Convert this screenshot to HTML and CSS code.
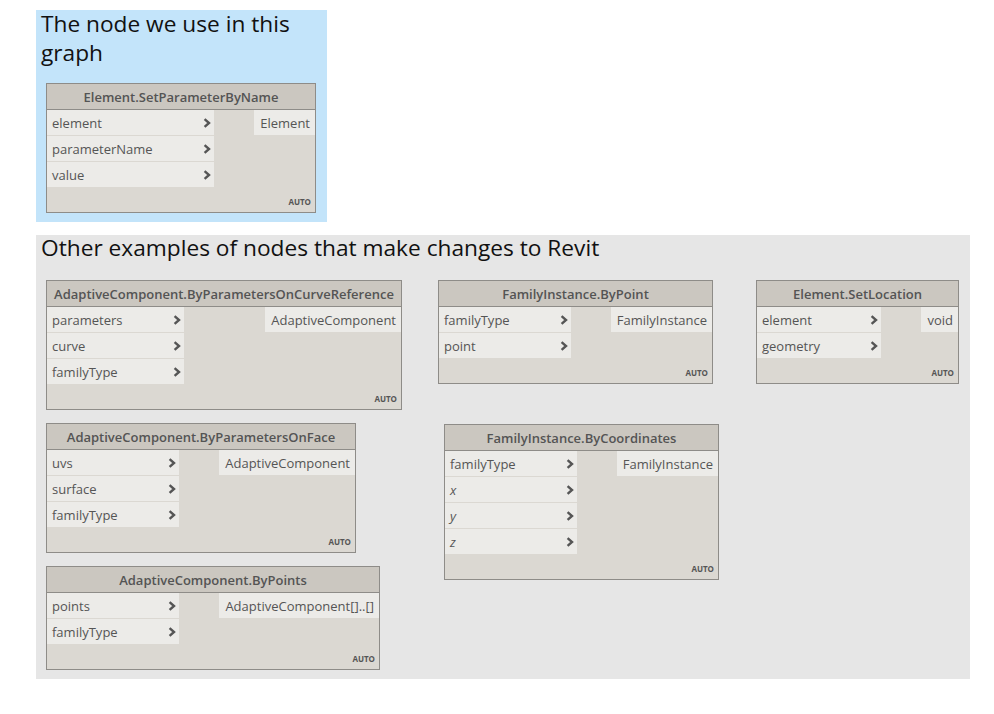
FILE: index.html
```html
<!DOCTYPE html>
<html>
<head>
<meta charset="utf-8">
<link rel="stylesheet" href="styles.css">
</head>
<body>
<div class="page">
  <section class="group group-blue">
    <h1 class="group-title title-blue">The node we use in this graph</h1>
    <div class="node node-main">
      <div class="node-head">Element.SetParameterByName</div>
      <div class="node-body">
        <div class="inputs in-167">
          <div class="port"><span>element</span><svg class="chev" viewBox="0 0 8 10"><path d="M1.6 1.2 L6 5 L1.6 8.8"/></svg></div>
          <div class="port"><span>parameterName</span><svg class="chev" viewBox="0 0 8 10"><path d="M1.6 1.2 L6 5 L1.6 8.8"/></svg></div>
          <div class="port"><span>value</span><svg class="chev" viewBox="0 0 8 10"><path d="M1.6 1.2 L6 5 L1.6 8.8"/></svg></div>
        </div>
        <div class="outputs"><div class="out">Element</div></div>
      </div>
      <div class="node-foot">AUTO</div>
    </div>
  </section>

  <section class="group group-gray">
    <h1 class="group-title title-gray">Other examples of nodes that make changes to Revit</h1>
    <div class="canvas">
      <div class="node n-curve">
        <div class="node-head">AdaptiveComponent.ByParametersOnCurveReference</div>
        <div class="node-body">
          <div class="inputs in-137">
            <div class="port"><span>parameters</span><svg class="chev" viewBox="0 0 8 10"><path d="M1.6 1.2 L6 5 L1.6 8.8"/></svg></div>
            <div class="port"><span>curve</span><svg class="chev" viewBox="0 0 8 10"><path d="M1.6 1.2 L6 5 L1.6 8.8"/></svg></div>
            <div class="port"><span>familyType</span><svg class="chev" viewBox="0 0 8 10"><path d="M1.6 1.2 L6 5 L1.6 8.8"/></svg></div>
          </div>
          <div class="outputs"><div class="out">AdaptiveComponent</div></div>
        </div>
        <div class="node-foot">AUTO</div>
      </div>

      <div class="node n-point">
        <div class="node-head">FamilyInstance.ByPoint</div>
        <div class="node-body">
          <div class="inputs in-132">
            <div class="port"><span>familyType</span><svg class="chev" viewBox="0 0 8 10"><path d="M1.6 1.2 L6 5 L1.6 8.8"/></svg></div>
            <div class="port"><span>point</span><svg class="chev" viewBox="0 0 8 10"><path d="M1.6 1.2 L6 5 L1.6 8.8"/></svg></div>
          </div>
          <div class="outputs"><div class="out">FamilyInstance</div></div>
        </div>
        <div class="node-foot">AUTO</div>
      </div>

      <div class="node n-loc">
        <div class="node-head">Element.SetLocation</div>
        <div class="node-body">
          <div class="inputs in-124">
            <div class="port"><span>element</span><svg class="chev" viewBox="0 0 8 10"><path d="M1.6 1.2 L6 5 L1.6 8.8"/></svg></div>
            <div class="port"><span>geometry</span><svg class="chev" viewBox="0 0 8 10"><path d="M1.6 1.2 L6 5 L1.6 8.8"/></svg></div>
          </div>
          <div class="outputs"><div class="out">void</div></div>
        </div>
        <div class="node-foot">AUTO</div>
      </div>

      <div class="node n-face">
        <div class="node-head">AdaptiveComponent.ByParametersOnFace</div>
        <div class="node-body">
          <div class="inputs in-132">
            <div class="port"><span>uvs</span><svg class="chev" viewBox="0 0 8 10"><path d="M1.6 1.2 L6 5 L1.6 8.8"/></svg></div>
            <div class="port"><span>surface</span><svg class="chev" viewBox="0 0 8 10"><path d="M1.6 1.2 L6 5 L1.6 8.8"/></svg></div>
            <div class="port"><span>familyType</span><svg class="chev" viewBox="0 0 8 10"><path d="M1.6 1.2 L6 5 L1.6 8.8"/></svg></div>
          </div>
          <div class="outputs"><div class="out">AdaptiveComponent</div></div>
        </div>
        <div class="node-foot">AUTO</div>
      </div>

      <div class="node n-coords">
        <div class="node-head">FamilyInstance.ByCoordinates</div>
        <div class="node-body">
          <div class="inputs in-132">
            <div class="port"><span>familyType</span><svg class="chev" viewBox="0 0 8 10"><path d="M1.6 1.2 L6 5 L1.6 8.8"/></svg></div>
            <div class="port"><span class="it">x</span><svg class="chev" viewBox="0 0 8 10"><path d="M1.6 1.2 L6 5 L1.6 8.8"/></svg></div>
            <div class="port"><span class="it">y</span><svg class="chev" viewBox="0 0 8 10"><path d="M1.6 1.2 L6 5 L1.6 8.8"/></svg></div>
            <div class="port"><span class="it">z</span><svg class="chev" viewBox="0 0 8 10"><path d="M1.6 1.2 L6 5 L1.6 8.8"/></svg></div>
          </div>
          <div class="outputs"><div class="out">FamilyInstance</div></div>
        </div>
        <div class="node-foot">AUTO</div>
      </div>

      <div class="node n-points">
        <div class="node-head">AdaptiveComponent.ByPoints</div>
        <div class="node-body">
          <div class="inputs in-132">
            <div class="port"><span>points</span><svg class="chev" viewBox="0 0 8 10"><path d="M1.6 1.2 L6 5 L1.6 8.8"/></svg></div>
            <div class="port"><span>familyType</span><svg class="chev" viewBox="0 0 8 10"><path d="M1.6 1.2 L6 5 L1.6 8.8"/></svg></div>
          </div>
          <div class="outputs"><div class="out">AdaptiveComponent[]..[]</div></div>
        </div>
        <div class="node-foot">AUTO</div>
      </div>
    </div>
  </section>
</div>
</body>
</html>
```

FILE: styles.css
```css
html, body {
  margin: 0;
  padding: 0;
  background: #ffffff;
}

body {
  font-family: "Open Sans", "Noto Sans", "DejaVu Sans", sans-serif;
  color: #111;
}

.page {
  padding: 10px 0 0 36px;
}

.group {
  box-sizing: border-box;
  display: flow-root;
}

.group-blue {
  width: 291px;
  height: 212px;
  background: #c3e4fa;
  padding: 0 0 0 10px;
}

.group-gray {
  width: 934px;
  height: 444px;
  margin-top: 13px;
  background: #e6e6e6;
  padding: 0 0 0 10px;
}

.group-title {
  margin: 0 0 0 -5px;
  font-size: 22.7px;
  font-weight: 400;
  line-height: 29px;
  color: #111;
  width: 280px;
}

.title-blue {
  margin-top: -1px;
  height: 74px;
}

.title-gray {
  width: auto;
  margin-top: -2px;
  height: 47px;
}

.canvas {
  position: relative;
}

/* node */
.node {
  box-sizing: border-box;
  border: 1px solid #8e8c88;
  background: #dbd8d2;
  display: flex;
  flex-direction: column;
}

.node-main {
  width: 270px;
}

.node-head {
  height: 25px;
  border-bottom: 1px solid #8e8c88;
  background: #cbc7c0;
  font-size: 13px;
  font-weight: 600;
  line-height: 26px;
  color: #545454;
  text-align: center;
  white-space: nowrap;
  overflow: hidden;
}

.node-body {
  display: flex;
  justify-content: space-between;
  align-items: flex-start;
}

.inputs {
  display: flex;
  flex-direction: column;
  gap: 1px;
}

.in-167 { width: 167px; }
.in-137 { width: 137px; }
.in-132 { width: 132px; }
.in-124 { width: 124px; }

.port {
  height: 25px;
  background: #ecebe8;
  display: flex;
  align-items: center;
  justify-content: space-between;
  padding: 0 3px 0 5px;
  font-size: 13px;
  color: #555;
  white-space: nowrap;
}

.it {
  font-style: italic;
}

.chev {
  width: 8px;
  height: 10px;
  fill: none;
  stroke: #555;
  stroke-width: 2.4;
  stroke-linejoin: miter;
}

.out {
  height: 25px;
  display: flex;
  align-items: center;
  background: #ecebe8;
  padding: 0 5px 0 6px;
  font-size: 13px;
  color: #555;
  white-space: nowrap;
}

.node-foot {
  height: 25px;
  display: flex;
  justify-content: flex-end;
  align-items: flex-end;
  padding: 0 4px 6px 0;
  box-sizing: border-box;
  font-size: 8px;
  font-weight: 700;
  line-height: 8px;
  color: #555;
}

/* nodes placed on the graph canvas */
.canvas .node {
  position: absolute;
}

.n-curve  { left: 0;     top: 0;     width: 356px; }
.n-point  { left: 392px; top: 0;     width: 275px; }
.n-loc    { left: 710px; top: 0;     width: 203px; }
.n-face   { left: 0;     top: 143px; width: 310px; }
.n-coords { left: 398px; top: 144px; width: 275px; }
.n-points { left: 0;     top: 286px; width: 334px; }
```
